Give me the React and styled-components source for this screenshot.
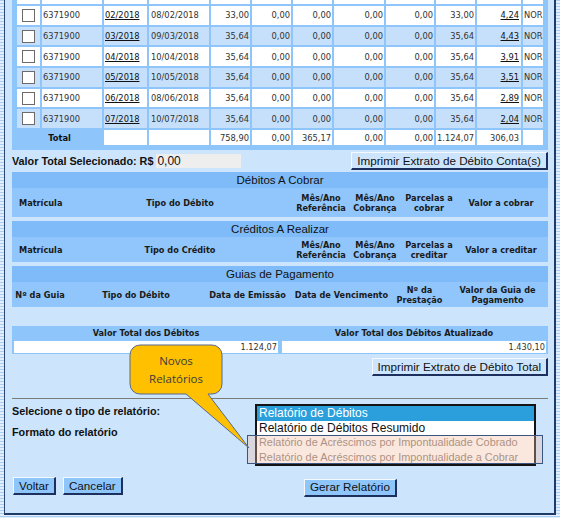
import styled, { createGlobalStyle } from "styled-components";

const VERDANA = `"DejaVu Sans", Verdana, sans-serif`;

const GlobalStyle = createGlobalStyle`
  html, body {
    margin: 0;
    padding: 0;
    background: #ffffff;
  }
  body {
    font-family: "Liberation Sans", Arial, sans-serif;
  }
`;

const colWidths = [23, 60, 43, 60, 39, 39, 39, 50, 48, 39, 44, 20];

const rows = [
  { ref: "02/2018", venc: "08/02/2018", valor: "33,00", atual: "4,24" },
  { ref: "03/2018", venc: "09/03/2018", valor: "35,64", atual: "4,43" },
  { ref: "04/2018", venc: "10/04/2018", valor: "35,64", atual: "3,91" },
  { ref: "05/2018", venc: "10/05/2018", valor: "35,64", atual: "3,51" },
  { ref: "06/2018", venc: "08/06/2018", valor: "35,64", atual: "2,89" },
  { ref: "07/2018", venc: "10/07/2018", valor: "35,64", atual: "2,04" },
];

const totals = ["", "", "758,90", "0,00", "365,17", "0,00", "0,00", "1.124,07", "306,03", ""];

const debitCols = [
  { label: "Matrícula", left: true },
  { label: "Tipo do Débito" },
  { label: "" },
  { label: ["Mês/Ano", "Referência"] },
  { label: ["Mês/Ano", "Cobrança"] },
  { label: ["Parcelas a", "cobrar"] },
  { label: "Valor a cobrar" },
];

const creditCols = [
  { label: "Matrícula", left: true },
  { label: "Tipo do Crédito" },
  { label: "" },
  { label: ["Mês/Ano", "Referência"] },
  { label: ["Mês/Ano", "Cobrança"] },
  { label: ["Parcelas a", "creditar"] },
  { label: "Valor a creditar" },
];

const guiaCols = [
  { label: "Nº da Guia" },
  { label: "Tipo do Débito" },
  { label: "Data de Emissão" },
  { label: "Data de Vencimento" },
  { label: ["Nº da", "Prestação"] },
  { label: ["Valor da Guia de", "Pagamento"] },
];

const reportOptions = [
  { label: "Relatório de Débitos", selected: true },
  { label: "Relatório de Débitos Resumido" },
  { label: "Relatório de Acréscimos por Impontualidade Cobrado", faded: true },
  { label: "Relatório de Acréscimos por Impontualidade a Cobrar", faded: true },
];

const HeadLabel = ({ label }) =>
  Array.isArray(label) ? (
    <>
      {label[0]}
      <br />
      {label[1]}
    </>
  ) : (
    label
  );

const App = () => {
  return (
    <>
      <GlobalStyle />
      <Frame>
        <Panel>
          <TableClip>
            <DataTable>
              <colgroup>
                {colWidths.map((w, i) => (
                  <Col key={i} $w={w} />
                ))}
              </colgroup>
              <tbody>
                <StubRow>
                  {colWidths.map((w, i) => (
                    <td key={i} />
                  ))}
                </StubRow>
                {rows.map((r, i) => (
                  <DataRow key={r.ref} $alt={i % 2 === 1}>
                    <Cell $align="center">
                      <Check type="checkbox" readOnly />
                    </Cell>
                    <Cell>6371900</Cell>
                    <Cell>
                      <RowLink>{r.ref}</RowLink>
                    </Cell>
                    <Cell $pad={2}>{r.venc}</Cell>
                    <Cell $align="right">{r.valor}</Cell>
                    <Cell $align="right">0,00</Cell>
                    <Cell $align="right">0,00</Cell>
                    <Cell $align="right">0,00</Cell>
                    <Cell $align="right">0,00</Cell>
                    <Cell $align="right">{r.valor}</Cell>
                    <Cell $align="right" $pad={2}>
                      <RowLink>{r.atual}</RowLink>
                    </Cell>
                    <Cell>NOR</Cell>
                  </DataRow>
                ))}
                <TotalRow>
                  <TotalLabel colSpan={2}>Total</TotalLabel>
                  {totals.map((t, i) => (
                    <Cell key={i} $align="right" $pad={i === 8 ? 2 : 1}>
                      {t}
                    </Cell>
                  ))}
                </TotalRow>
              </tbody>
            </DataTable>
          </TableClip>

          <SelectedRow>
            <SelectedInfo>
              <StrongLabel>Valor Total Selecionado: R$</StrongLabel>
              <ValueBox>0,00</ValueBox>
            </SelectedInfo>
            <Button $light>Imprimir Extrato de Débito Conta(s)</Button>
          </SelectedRow>

          <Section $mt={2}>
            <SectionTitle>Débitos A Cobrar</SectionTitle>
            <HeadRow $cols="108px 120px 56px 50px 58px 50px 94px" $h={29}>
              {debitCols.map((c, i) => (
                <HeadCell key={i} $left={c.left}>
                  <HeadLabel label={c.label} />
                </HeadCell>
              ))}
            </HeadRow>
          </Section>

          <Section $mt={4}>
            <SectionTitle>Créditos A Realizar</SectionTitle>
            <HeadRow $cols="108px 120px 56px 50px 58px 50px 94px" $h={25}>
              {creditCols.map((c, i) => (
                <HeadCell key={i} $left={c.left}>
                  <HeadLabel label={c.label} />
                </HeadCell>
              ))}
            </HeadRow>
          </Section>

          <Section $mt={4}>
            <SectionTitle>Guias de Pagamento</SectionTitle>
            <HeadRow $cols="56px 136px 87px 101px 55px 101px" $h={25}>
              {guiaCols.map((c, i) => (
                <HeadCell key={i}>
                  <HeadLabel label={c.label} />
                </HeadCell>
              ))}
            </HeadRow>
          </Section>

          <TotalsBox>
            <TotalsHead>Valor Total dos Débitos</TotalsHead>
            <TotalsHead>Valor Total dos Débitos Atualizado</TotalsHead>
            <TotalsValue>1.124,07</TotalsValue>
            <TotalsValue>1.430,10</TotalsValue>
          </TotalsBox>

          <RightActions>
            <Button $light>Imprimir Extrato de Débito Total</Button>
          </RightActions>

          <Rule />

          <FormArea>
            <LabelCol>
              <StrongLabel>Selecione o tipo de relatório:</StrongLabel>
              <StrongLabel>Formato do relatório</StrongLabel>
            </LabelCol>
            <ListBox>
              {reportOptions.map((o) => (
                <ListItem key={o.label} $selected={o.selected} $faded={o.faded}>
                  {o.label}
                </ListItem>
              ))}
              <Highlight />
            </ListBox>
          </FormArea>

          <ButtonRow>
            <ButtonGroup>
              <Button>Voltar</Button>
              <Button>Cancelar</Button>
            </ButtonGroup>
            <div>
              <Button>Gerar Relatório</Button>
            </div>
          </ButtonRow>

          <Callout>
            <CalloutShape width="124" height="108" viewBox="0 0 124 108">
              <path
                d="M12 2 H84 A10 10 0 0 1 94 12 V41 A10 10 0 0 1 84 51 H80 L121 105 L58 51 H12 A10 10 0 0 1 2 41 V12 A10 10 0 0 1 12 2 Z"
                fill="#ffc000"
                stroke="#56698e"
                strokeWidth="1"
              />
            </CalloutShape>
            <CalloutText>
              <span>Novos</span>
              <span>Relatórios</span>
            </CalloutText>
          </Callout>
        </Panel>
      </Frame>
    </>
  );
};

const Frame = styled.div`
  width: 552px;
  padding: 0 4px 3px;
  background: repeating-linear-gradient(to bottom, #a8cdf1 0 1px, #e3effc 1px 3px);
`;

const Panel = styled.div`
  position: relative;
  background: #cce5fd;
  border-left: 1px solid #2b4670;
  border-right: 2px solid #1f3a66;
  border-bottom: 2px solid #1f3a66;
  padding: 0 6px 16px 7px;
`;

const TableClip = styled.div`
  overflow: hidden;
`;

const DataTable = styled.table`
  width: 536px;
  margin-top: -3px;
  table-layout: fixed;
  border-collapse: separate;
  border-spacing: 2px;
  border: 3px solid #8ec5fb;
  border-top: 0;
  background: #8ec5fb;
  font-family: ${VERDANA};
  font-size: 8.3px;
  color: #333333;
`;

const Col = styled.col`
  width: ${(p) => p.$w}px;
`;

const StubRow = styled.tr`
  height: 5px;
  td {
    padding: 0;
    background: #ffffff;
  }
`;

const DataRow = styled.tr`
  td {
    height: 18.7px;
    background: ${(p) => (p.$alt ? "#c6e0fb" : "#ffffff")};
  }
`;

const TotalRow = styled.tr`
  td {
    height: 15px;
    background: #ffffff;
  }
`;

const Cell = styled.td`
  padding: 0 ${(p) => p.$pad || 1}px;
  text-align: ${(p) => p.$align || "left"};
  white-space: nowrap;
  overflow: hidden;
  vertical-align: middle;
  line-height: 12px;
`;

const TotalLabel = styled.td`
  && {
    background: #8ec5fb;
  }
  padding: 0;
  line-height: 12px;
  text-align: center;
  font-weight: bold;
  color: #111111;
`;

const Check = styled.input`
  appearance: none;
  display: block;
  margin: 0 auto;
  width: 13px;
  height: 13px;
  border: 1px solid #6b6b6b;
  background: #ffffff;
  box-sizing: border-box;
`;

const RowLink = styled.span`
  color: #111111;
  text-decoration: underline;
`;

const SelectedRow = styled.div`
  display: flex;
  align-items: center;
  justify-content: space-between;
  margin-top: 2px;
  height: 18px;
`;

const SelectedInfo = styled.div`
  display: flex;
  align-items: center;
  gap: 3px;
`;

const StrongLabel = styled.span`
  font-size: 10.8px;
  font-weight: bold;
  line-height: 13px;
  color: #111111;
`;

const ValueBox = styled.span`
  display: inline-block;
  width: 84px;
  height: 14px;
  padding-left: 1px;
  background: #eeeeee;
  font-size: 12px;
  line-height: 14px;
  color: #111111;
`;

const Button = styled.button`
  font-family: "Liberation Sans", Arial, sans-serif;
  font-size: 11.7px;
  color: #111111;
  height: 18px;
  padding: 0 5px;
  margin: 0;
  line-height: 14px;
  background: ${(p) => (p.$light ? "#cde5fc" : "#8ec5fb")};
  border-style: solid;
  border-width: 1px 2px 2px 1px;
  border-color: #f4f9ff #1d2f5c #1d2f5c #f4f9ff;
  cursor: pointer;
`;

const Section = styled.div`
  margin-top: ${(p) => p.$mt}px;
  background: #90c6fb;
`;

const SectionTitle = styled.div`
  height: 16px;
  line-height: 16px;
  background: #7ebbf8;
  text-align: center;
  font-size: 11.5px;
  color: #111111;
`;

const HeadRow = styled.div`
  display: grid;
  grid-template-columns: ${(p) => p.$cols};
  align-items: center;
  height: ${(p) => p.$h}px;
  font-family: ${VERDANA};
  font-weight: bold;
  font-size: 8.2px;
  line-height: 10px;
  color: #1a1a1a;
`;

const HeadCell = styled.div`
  text-align: ${(p) => (p.$left ? "left" : "center")};
  padding-left: ${(p) => (p.$left ? 7 : 0)}px;
  white-space: nowrap;
`;

const TotalsBox = styled.div`
  display: grid;
  grid-template-columns: 1fr 1fr;
  column-gap: 4px;
  row-gap: 1px;
  margin-top: 19px;
  padding: 0 2px 1px;
  background: #8ec5fb;
  font-family: ${VERDANA};
  font-size: 8.2px;
`;

const TotalsHead = styled.div`
  height: 14px;
  line-height: 14px;
  text-align: center;
  font-weight: bold;
  color: #1a1a1a;
`;

const TotalsValue = styled.div`
  height: 12px;
  line-height: 12px;
  padding-right: 1px;
  text-align: right;
  background: #ffffff;
  color: #333333;
`;

const RightActions = styled.div`
  display: flex;
  justify-content: flex-end;
  margin-top: 4px;
`;

const Rule = styled.div`
  height: 1px;
  margin-top: 22px;
  background: #7a7a7a;
`;

const FormArea = styled.div`
  display: grid;
  grid-template-columns: 243px 281px;
  margin-top: 5px;
`;

const LabelCol = styled.div`
  display: flex;
  flex-direction: column;
  gap: 8px;
  padding-top: 1px;
`;

const ListBox = styled.div`
  position: relative;
  border: 2px solid #141414;
  background: #ffffff;
`;

const ListItem = styled.div`
  height: 14.5px;
  line-height: 14.5px;
  padding-left: 2px;
  font-size: ${(p) => (p.$faded ? 10.9 : 12)}px;
  white-space: nowrap;
  overflow: hidden;
  background: ${(p) => (p.$selected ? "#2a9fdc" : "transparent")};
  color: ${(p) => (p.$selected ? "#ffffff" : p.$faded ? "#8a7a75" : "#111111")};
`;

const Highlight = styled.div`
  position: absolute;
  left: -10px;
  top: 29px;
  width: 296px;
  height: 29px;
  box-sizing: border-box;
  border: 1px solid #3b5582;
  background: rgba(240, 190, 160, 0.35);
`;

const ButtonRow = styled.div`
  display: grid;
  grid-template-columns: 292px auto;
  margin-top: 11px;
`;

const ButtonGroup = styled.div`
  display: flex;
  gap: 7px;
  padding-left: 1px;
`;

const Callout = styled.div`
  position: absolute;
  left: 123px;
  top: 343px;
  width: 124px;
  height: 108px;
  pointer-events: none;
`;

const CalloutShape = styled.svg`
  position: absolute;
  left: 0;
  top: 0;
`;

const CalloutText = styled.div`
  position: absolute;
  left: 2px;
  top: 2px;
  width: 92px;
  height: 49px;
  display: flex;
  flex-direction: column;
  align-items: center;
  justify-content: center;
  font-family: "Open Sans", sans-serif;
  font-size: 11.5px;
  line-height: 18px;
  color: #3b3b3b;
`;

export default App;
